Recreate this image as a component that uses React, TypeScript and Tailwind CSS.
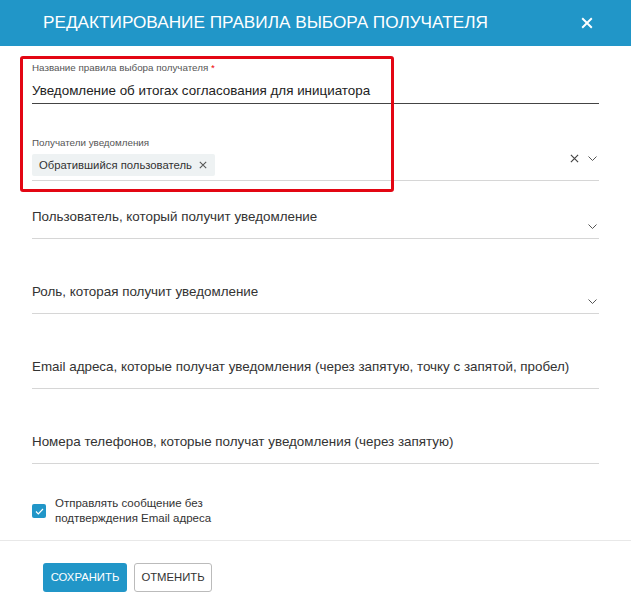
import React from 'react'

function Chevron() {
  return (
    <svg width="9" height="5" viewBox="0 0 9 5" fill="none" className="shrink-0">
      <path d="M0.5 0.5L4.5 4.5L8.5 0.5" stroke="#555" strokeWidth="1" />
    </svg>
  )
}

function Cross({ size = 9, color = '#555', width = 1.2 }: { size?: number; color?: string; width?: number }) {
  return (
    <svg width={size} height={size} viewBox="0 0 10 10" fill="none" className="shrink-0">
      <path d="M1 1L9 9M9 1L1 9" stroke={color} strokeWidth={width} />
    </svg>
  )
}

function SelectField({ label, top, chevron }: { label: string; top: string; chevron?: boolean }) {
  return (
    <div className={`${top} border-b border-[#d6d6d6]`}>
      <div className="flex h-[31px] justify-between">
        <span className="self-start whitespace-nowrap text-[13.4px] leading-[20px] text-[#333]">{label}</span>
        {chevron && (
          <span className="mb-[9px] mr-[2px] self-end">
            <Chevron />
          </span>
        )}
      </div>
    </div>
  )
}

export default function App() {
  return (
    <div className="relative h-[611px] w-[631px] bg-white" style={{ fontFamily: '"Liberation Sans", Arial, sans-serif' }}>
      <header className="flex h-[46px] items-center justify-between bg-[#2196c8] pl-[43px] pr-[38px]">
        <h1 className="text-[17.2px] font-normal uppercase text-white">
          Редактирование правила выбора получателя
        </h1>
        <Cross size={12} color="#fff" width={1.6} />
      </header>

      <div className="px-[32px]">
        <div className="border-b border-[#444] pb-[2px] pt-[15px]">
          <div className="text-[9.8px] leading-[14px] text-[#555]">
            Название правила выбора получателя <span className="text-[#e00]">*</span>
          </div>
          <div className="mt-[6px] text-[13.4px] leading-[20px] text-[#222]">
            Уведомление об итогах согласования для инициатора
          </div>
        </div>

        <div className="border-b border-[#d6d6d6] pb-[4px] pt-[32px]">
          <div className="text-[9.8px] leading-[14px] text-[#555]">Получатели уведомления</div>
          <div className="mt-[4px] flex items-start">
            <div className="flex h-[22px] items-center gap-[7px] rounded-[2px] bg-[#eef2f3] pl-[7px] pr-[8px] text-[11.3px] text-[#333]">
              Обратившийся пользователь
              <Cross size={8} color="#555" width={1.3} />
            </div>
            <div className="ml-auto mt-[-1px] flex h-[10px] items-center gap-[9px] pr-[2px]">
              <Cross size={9} color="#444" width={1.3} />
              <Chevron />
            </div>
          </div>
        </div>

        <SelectField label="Пользователь, который получит уведомление" top="pt-[26px]" chevron />
        <SelectField label="Роль, которая получит уведомление" top="pt-[43px]" chevron />
        <SelectField label="Email адреса, которые получат уведомления (через запятую, точку с запятой, пробел)" top="pt-[43px]" />
        <SelectField label="Номера телефонов, которые получат уведомления (через запятую)" top="pt-[43px]" />

        <div className="mt-[32px] flex items-center gap-[9px] pb-[14px]">
          <span className="flex h-[14px] w-[14px] items-center justify-center rounded-[2px] bg-[#2196c8]">
            <svg width="9" height="7" viewBox="0 0 9 7" fill="none">
              <path d="M1 3.5L3.3 5.8L8 1" stroke="#fff" strokeWidth="1.2" />
            </svg>
          </span>
          <span className="text-[11.5px] leading-[15px] text-[#333]">
            Отправлять сообщение без
            <br />
            подтверждения Email адреса
          </span>
        </div>
      </div>

      <div className="flex gap-[7px] border-t border-[#e8e8e8] px-[43px] pt-[22px]">
        <button className="h-[29px] w-[84px] rounded-[3px] bg-[#2196c8] text-[11.3px] uppercase text-white">Сохранить</button>
        <button className="h-[29px] w-[78px] rounded-[3px] border border-[#bbb] bg-white text-[11.3px] uppercase text-[#333]">Отменить</button>
      </div>

      <div className="pointer-events-none absolute left-[20px] top-[56px] h-[136px] w-[374px] rounded-[3px] border-[3px] border-[#e30613]" />
    </div>
  )
}
